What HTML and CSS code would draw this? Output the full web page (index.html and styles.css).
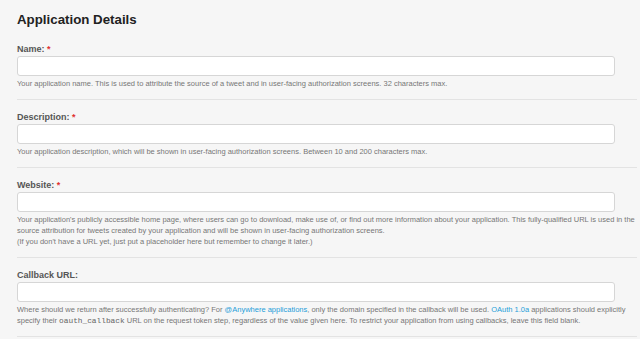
FILE: index.html
```html
<!DOCTYPE html>
<html lang="en">

<head>
    <meta charset="UTF-8">
    <meta name="viewport" content="width=device-width, initial-scale=1.0">
    <title>Application Details</title>
    <link rel="stylesheet" href="styles.css">
</head>

<body>
    <div class="app-form">
        <h1 class="app-title">Application Details</h1>

        <div class="field">
            <label class="field-label" for="name">Name: <span class="req">*</span></label>
            <input class="field-input" type="text" id="name">
            <p class="field-help">Your application name. This is used to attribute the source of a tweet and in user-facing authorization screens. 32 characters max.</p>
        </div>

        <div class="field">
            <label class="field-label" for="desc">Description: <span class="req">*</span></label>
            <input class="field-input" type="text" id="desc">
            <p class="field-help">Your application description, which will be shown in user-facing authorization screens. Between 10 and 200 characters max.</p>
        </div>

        <div class="field">
            <label class="field-label" for="site">Website: <span class="req">*</span></label>
            <input class="field-input" type="text" id="site">
            <p class="field-help">Your application's publicly accessible home page, where users can go to download, make use of, or find out more information about your application. This fully-qualified URL is used in the<br>source attribution for tweets created by your application and will be shown in user-facing authorization screens.<br>(If you don't have a URL yet, just put a placeholder here but remember to change it later.)</p>
        </div>

        <div class="field">
            <label class="field-label" for="callback">Callback URL:</label>
            <input class="field-input" type="text" id="callback">
            <p class="field-help">Where should we return after successfully authenticating? For <a href="#">@Anywhere applications</a>, only the domain specified in the callback will be used. <a href="#">OAuth 1.0a</a> applications should explicitly<br>specify their <code>oauth_callback</code> URL on the request token step, regardless of the value given here. To restrict your application from using callbacks, leave this field blank.</p>
        </div>
    </div>
</body>

</html>
```

FILE: styles.css
```css
html,
body {
    margin: 0;
    background-color: #f6f6f6;
    font-family: "Liberation Sans", Arial, sans-serif;
}

.app-form {
    padding: 0 3px 0 17px;
}

.app-title {
    margin: 10px 0 0;
    font-size: 13.3px;
    line-height: 20px;
    color: #222;
}

.field {
    display: flex;
    flex-direction: column;
    align-items: flex-start;
    padding: 11px 0 9.5px;
    border-bottom: 1px solid #e3e3e3;
}

.field:first-of-type {
    padding-top: 13px;
}

.field-label {
    font-size: 9px;
    line-height: 12px;
    font-weight: bold;
    color: #555;
    margin-bottom: 1px;
}

.req {
    color: #e0312f;
}

.field-input {
    box-sizing: border-box;
    width: 598px;
    height: 20px;
    margin: 0;
    border: 1px solid #d6d6d6;
    border-radius: 3px;
    background-color: #fff;
}

.field-help {
    margin: 3px 0 0;
    font-size: 7.5px;
    line-height: 10.7px;
    color: #777;
    white-space: nowrap;
}

.field-help a {
    color: #1f9ed9;
    text-decoration: none;
}

.field-help code {
    font-family: "Liberation Mono", "Courier New", monospace;
    font-size: 7.8px;
    color: #666;
}
```
